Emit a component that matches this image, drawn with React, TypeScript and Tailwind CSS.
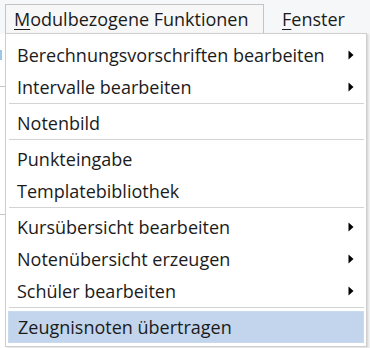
import React from 'react'

type Entry = { label: string; sub?: boolean; active?: boolean } | 'sep'

const ENTRIES: Entry[] = [
  { label: 'Berechnungsvorschriften bearbeiten', sub: true },
  { label: 'Intervalle bearbeiten', sub: true },
  'sep',
  { label: 'Notenbild' },
  'sep',
  { label: 'Punkteingabe' },
  { label: 'Templatebibliothek' },
  'sep',
  { label: 'Kursübersicht bearbeiten', sub: true },
  { label: 'Notenübersicht erzeugen', sub: true },
  { label: 'Schüler bearbeiten', sub: true },
  'sep',
  { label: 'Zeugnisnoten übertragen', active: true },
]

function SubArrow() {
  return (
    <svg width="6" height="10" viewBox="0 0 6 10" className="shrink-0">
      <path d="M0.5 0.5 L5.5 5 L0.5 9.5 Z" fill="#000" />
    </svg>
  )
}

export default function App() {
  return (
    <div
      className="relative w-[370px] h-[348px] overflow-hidden bg-white text-[#1b1b1b]"
      style={{ fontFamily: '"Open Sans", "Noto Sans", sans-serif' }}
    >
      {/* menu bar */}
      <div className="h-[34px] bg-[#f6f7f8] flex items-end">
        <div className="ml-[5px] h-[30px] w-[259px] border border-b-0 border-[#c4c4c4] bg-[#f7f7f7] flex items-center pl-[8px] text-[18px]">
          <span className="underline underline-offset-[3px] decoration-1">M</span>odulbezogene Funktionen
        </div>
        <div className="h-[30px] flex items-center pl-[18px] text-[18px]">
          <span className="underline underline-offset-[3px] decoration-1">F</span>enster
        </div>
      </div>

      {/* background content peeking out */}
      <div className="absolute left-0 top-[34px] w-[5px] h-[314px] bg-white">
        <div className="absolute top-[52px] w-full h-px bg-[#c8c8c8]" />
        <div className="absolute top-[180px] w-full h-px bg-[#c8c8c8]" />
        <div className="absolute top-[16px] left-0 w-[2px] h-[10px] bg-[#9cc7ea]" />
      </div>
      <div className="absolute right-0 top-[34px] w-[3px] h-[314px] bg-[#f3f3f3]" />

      {/* dropdown */}
      <div className="absolute left-[5px] top-[33px] w-[362px] h-[314px] bg-white border border-[#cfcfcf] shadow-[1px_1px_2px_rgba(0,0,0,0.15)] pt-[5px] px-[2px] flex flex-col">
        {ENTRIES.map((e, i) =>
          e === 'sep' ? (
            <div key={i} className="h-[4px] pl-[1px]">
              <div className="w-full h-px bg-[#d3d3d3]" />
            </div>
          ) : (
            <div
              key={i}
              className={[
                'h-[32px] flex items-center pl-[9px] pr-[10px] text-[18px]',
                e.active ? 'bg-[#c2d5ec] border border-[#c9d9ee]' : '',
              ].join(' ')}
            >
              <span className="flex-1 whitespace-nowrap">{e.label}</span>
              {e.sub && <SubArrow />}
            </div>
          )
        )}
      </div>
    </div>
  )
}
